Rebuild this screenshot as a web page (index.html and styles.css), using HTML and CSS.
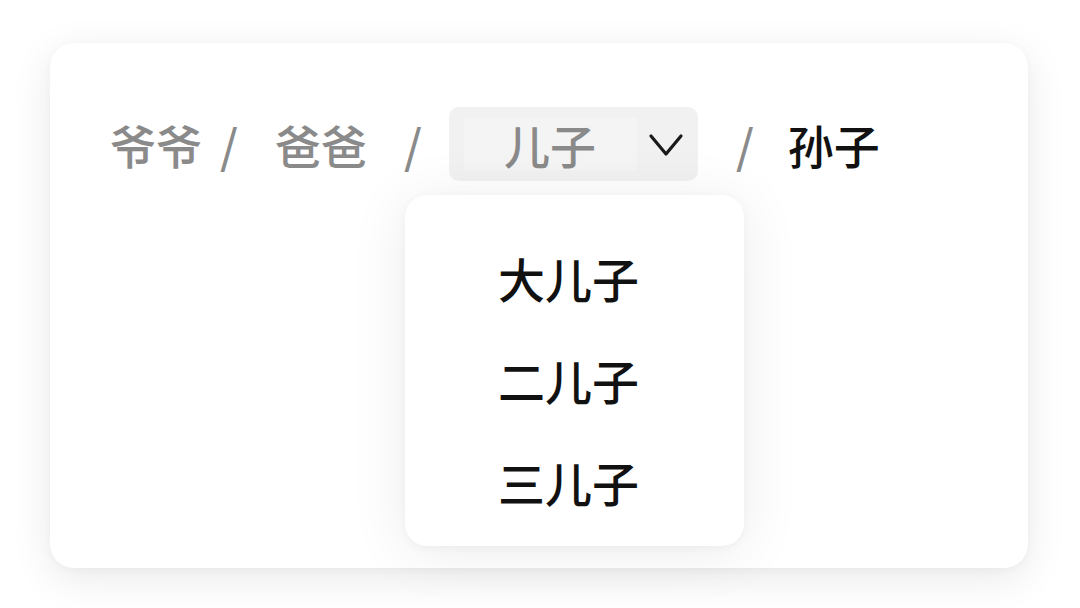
FILE: index.html
```html
<!DOCTYPE html>
<html lang="zh">
<head>
<meta charset="utf-8">
<link rel="stylesheet" href="styles.css">
</head>
<body>
<div class="card">
  <nav class="crumbs">
    <span class="crumb">爷爷</span>
    <span class="sep sep-tight">/</span>
    <span class="crumb">爸爸</span>
    <span class="sep">/</span>
    <div class="dropdown">
      <div class="trigger">
        <span class="trigger-inner"></span>
        <span class="trigger-text">儿子</span>
        <svg class="chev" width="36" height="26" viewBox="0 0 36 26"><path d="M3 4 L18 22 L33 4" fill="none" stroke="#1a1a1a" stroke-width="3.2" stroke-linecap="round" stroke-linejoin="round"/></svg>
      </div>
      <ul class="menu">
        <li>大儿子</li>
        <li>二儿子</li>
        <li>三儿子</li>
      </ul>
    </div>
    <span class="sep sep-wide">/</span>
    <span class="crumb current">孙子</span>
  </nav>
</div>
</body>
</html>
```

FILE: styles.css
```css
html, body {
  margin: 0;
  padding: 0;
  background: #ffffff;
}
body {
  width: 1080px;
  height: 608px;
  overflow: hidden;
  padding: 43px 0 0 50px;
  box-sizing: border-box;
  font-family: "Noto Sans CJK SC", "Noto Sans", sans-serif;
}
.card {
  width: 978px;
  height: 525px;
  background: #ffffff;
  border-radius: 24px;
  box-shadow: 0 10px 40px rgba(0, 0, 0, 0.09), 0 2px 8px rgba(0, 0, 0, 0.03);
  padding: 64px 0 0 60px;
  box-sizing: border-box;
}
.crumbs {
  display: flex;
  align-items: center;
  height: 74px;
  font-size: 46px;
  font-weight: 500;
  line-height: 1;
  color: #8a8a8a;
}
.crumb {
  display: block;
}
.crumb.current {
  color: #111111;
}
.sep {
  display: block;
  margin: 0 27px 0 37px;
  color: #8a8a8a;
}
.sep-tight {
  margin: 0 37px 0 18px;
}
.sep-wide {
  margin: 0 34px 0 38px;
}
.dropdown {
  position: relative;
}
.trigger {
  position: relative;
  width: 249px;
  height: 74px;
  background: #f1f1f1;
  border-radius: 10px;
  display: flex;
  align-items: center;
  padding-left: 55px;
  box-sizing: border-box;
}
.trigger-inner {
  position: absolute;
  left: 15px;
  top: 11px;
  width: 173px;
  height: 52px;
  background: #f4f4f4;
}
.trigger-text {
  position: relative;
  color: #8a8a8a;
}
.chev {
  position: relative;
  margin-left: 52px;
  margin-top: 2px;
}
.menu {
  position: absolute;
  left: -44px;
  top: 88px;
  width: 339px;
  height: 351px;
  margin: 0;
  padding: 32px 12px 0 0;
  box-sizing: border-box;
  list-style: none;
  background: #ffffff;
  border-radius: 22px;
  box-shadow: 0 6px 60px rgba(0, 0, 0, 0.08), 0 2px 10px rgba(0, 0, 0, 0.04);
  font-size: 47px;
  font-weight: 500;
  color: #111111;
}
.menu li {
  height: 102px;
  line-height: 102px;
  text-align: center;
}
```
